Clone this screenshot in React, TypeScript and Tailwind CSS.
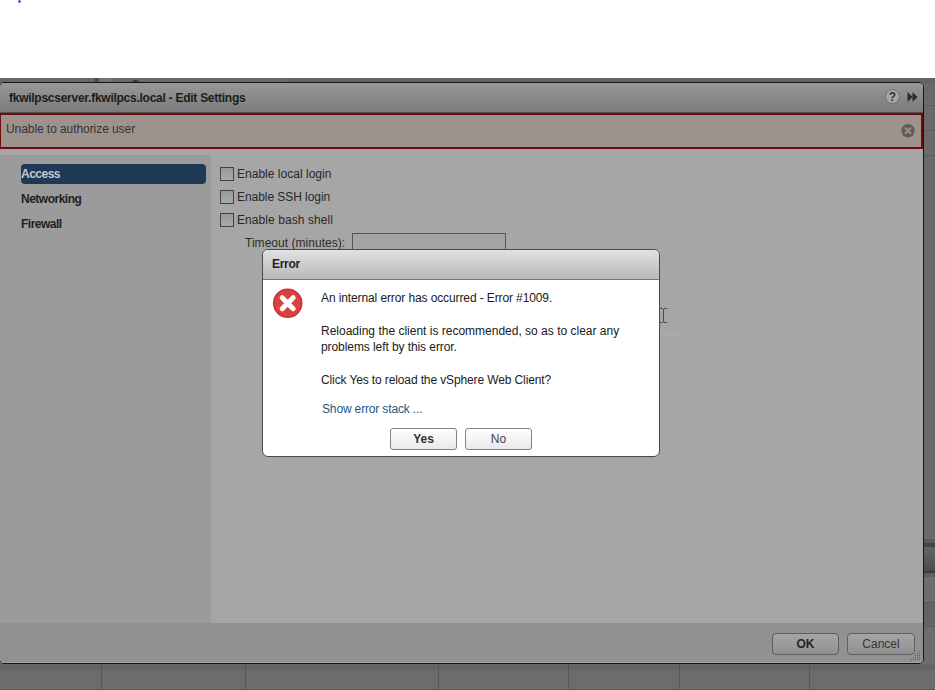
import clsx from "clsx";

const navItems = [
  { label: "Access", active: true },
  { label: "Networking", active: false },
  { label: "Firewall", active: false },
];

const options = [
  { label: "Enable local login", tracking: "tracking-[0.02px]" },
  { label: "Enable SSH login", tracking: "tracking-[-0.06px]" },
  { label: "Enable bash shell", tracking: "tracking-[0.08px]" },
];

function Backdrop() {
  return (
    <div className="flex h-full flex-col bg-[#6c6c6c]">
      <div className="flex h-[5px] shrink-0 bg-[#696969]">
        <div className="w-[94px]" />
        <div className="w-[5px] bg-[#48525c]" />
        <div className="w-[14px] bg-[#747474]" />
        <div className="w-[19px]" />
        <div className="mt-[2px] h-[3px] w-[7px] rounded-t-full border-t-2 border-[#303b46]" />
        <div className="w-[148px]" />
        <div className="grow bg-[#646464]" />
      </div>
      <div className="flex h-[581px] shrink-0 justify-end">
        <div className="flex w-[11px] flex-col bg-[#6a6a6a]">
          <div className="h-[23px] border-b border-[#5c5c5c]" />
          <div className="h-[25px] border-b border-[#5c5c5c]" />
          <div className="h-[25px] border-b border-[#5c5c5c]" />
          <div className="h-[387px] border-b-4 border-[#5c5c5c]" />
          <div className="h-1 shrink-0 bg-[#3b4652]" />
          <div className="h-[26px] border-b-2 border-[#3c3c3c] bg-gradient-to-b from-[#656565] to-[#4b4b4b]" />
          <div className="h-1 bg-[#5e5e5e]" />
          <div className="h-[26px] border-b border-[#575757] bg-[#6d6d6d]" />
          <div className="h-6 border-b border-[#5b5b5b] bg-[#636363]" />
          <div className="grow bg-[#6d6d6d]" />
        </div>
      </div>
      <div className="flex h-[26px] border-b border-[#605b5b] bg-gradient-to-b from-[#656565] from-20% to-[#6c6c6c] to-30%">
        <div className="w-[102px] border-r border-[#575757]" />
        <div className="w-36 border-r border-[#575757]" />
        <div className="w-[193px] border-r border-[#575757]" />
        <div className="w-[130px] border-r border-[#575757]" />
        <div className="w-[111px] border-r border-[#575757]" />
        <div className="w-[130px] border-r border-[#575757]" />
      </div>
    </div>
  );
}

function TitleBar() {
  return (
    <div className="flex h-[30px] shrink-0 items-center justify-between border-b border-[#555] bg-gradient-to-b from-[#989898] to-[#7b7b7b] pr-1 pl-[9px]">
      <h1 className="font-bold tracking-[-0.26px] text-[#1c1c1c]">
        fkwilpscserver.fkwilpcs.local - Edit Settings
      </h1>
      <div className="mt-[-2px] flex items-center gap-[7px]">
        <span className="flex h-[15px] w-[15px] items-center justify-center rounded-full border border-[#6d6d6d] bg-[#a8a8a8] text-[12px] leading-none font-bold text-[#333]">
          ?
        </span>
        <svg width="12" height="12" viewBox="0 0 12 12" fill="#2b2b2b">
          <path d="M.5 1l5 5-5 5zM5.5 1l5 5-5 5z" />
        </svg>
      </div>
    </div>
  );
}

function AlertBar() {
  return (
    <div className="flex h-9 shrink-0 justify-between border-2 border-l border-[#6d0c0c] bg-[#9e938c] pr-[6px] pl-[5px]">
      <p className="pt-[5px] tracking-[-0.07px] text-[#35313a]">Unable to authorize user</p>
      <svg className="mt-2" width="15" height="15" viewBox="0 0 15 15">
        <circle cx="8" cy="7.8" r="6.7" fill="#5f5d58" />
        <path d="M5.5 5.3l5 5M10.5 5.3l-5 5" stroke="#968f88" strokeWidth="2.2" strokeLinecap="round" />
      </svg>
    </div>
  );
}

function SettingsWindow() {
  return (
    <div className="absolute top-1 left-[-1px] flex h-[582px] w-[925px] flex-col overflow-hidden rounded-[5px] border border-[#151515] bg-[#a6a6a6]">
      <TitleBar />
      <AlertBar />
      <div className="flex grow pt-[6px]">
        <nav className="flex w-[211px] flex-col gap-[5px] bg-[#9b9b9b] pt-[9px] pr-[5px] pl-[21px]">
          {navItems.map((item) => (
            <div
              key={item.label}
              className={clsx(
                "h-5 rounded-[4px] leading-5 font-bold tracking-[-0.5px]",
                item.active ? "bg-[#1f3853] text-[#c4c9cf]" : "text-[#222]"
              )}
            >
              {item.label}
            </div>
          ))}
        </nav>
        <div className="flex flex-col pt-[7px] pl-[9px]">
          {options.map((option) => (
            <label key={option.label} className="flex h-[23px] items-center gap-[3px] text-[#27272c]">
              <span className="h-[14px] w-[14px] border border-[#414444] bg-gradient-to-b from-[#999] to-[#aaa]" />
              <span className={option.tracking}>{option.label}</span>
            </label>
          ))}
          <div className="flex h-[23px] pl-[26px] text-[#2d2d2d]">
            <span className="ml-[-1px] w-[107px] shrink-0 pt-[3px] tracking-[0.03px] whitespace-nowrap">
              Timeout (minutes):
            </span>
            <span className="mt-[2px] h-[22px] w-[154px] border border-[#555] bg-[#a4a4a4]" />
          </div>
        </div>
      </div>
      <div className="flex h-10 shrink-0 items-start justify-end gap-2 border-b border-[#a3a3a3] bg-[#919191] pt-[10px] pr-2">
        <button className="h-[22px] w-[67px] rounded-[4px] border border-[#5f5f5f] bg-gradient-to-b from-[#a5a5a5] to-[#919191] leading-5 font-bold text-[#242424]">
          OK
        </button>
        <button className="h-[22px] w-[68px] rounded-[4px] border border-[#5f5f5f] bg-gradient-to-b from-[#a5a5a5] to-[#919191] leading-5 text-[#363636]">
          Cancel
        </button>
      </div>
      <svg className="absolute right-[2px] bottom-[2px]" width="10" height="10" viewBox="0 0 10 10" stroke="#585858">
        <path d="M8 .5h1M6 2.5h3M4 4.5h5M2 6.5h7M0 8.5h9" strokeDasharray="1 1" />
      </svg>
    </div>
  );
}

function TextCursor() {
  return (
    <div className="absolute top-[230px] left-[660px]">
      <svg width="25" height="28" viewBox="0 0 25 28" fill="none">
        <path d="M0 .5h3M4 .5h3M3.5 1v13M0 14.5h3M4 14.5h3" stroke="#4b4b4b" />
        <path d="M0 26.5h23" stroke="#b0b0b0" />
      </svg>
    </div>
  );
}

function ErrorDialog() {
  return (
    <div className="absolute top-[171px] left-[262px] flex h-[208px] w-[398px] flex-col overflow-hidden rounded-[6px] border border-[#4a4a4a] bg-white">
      <div className="h-[30px] shrink-0 border-b border-[#777] bg-gradient-to-b from-[#e1e1e1] to-[#b9b9b9] pl-[9px] leading-[29px] font-bold tracking-[-0.3px] text-[#222]">
        Error
      </div>
      <div className="flex pt-[9px] pl-[9px]">
        <svg className="mt-[-1px] shrink-0" width="32" height="32" viewBox="0 0 32 32">
          <circle cx="15.7" cy="15.2" r="14.8" fill="#cf3537" />
          <circle cx="15.7" cy="15.2" r="13" fill="#d94240" />
          <path d="M10.2 9.7l11 11M21.2 9.7l-11 11" stroke="#fff" strokeWidth="5" strokeLinecap="round" />
        </svg>
        <div className="pl-[17px] text-[#202020]">
          <p className="h-[33px] pt-[1px] leading-4 tracking-[-0.11px]">An internal error has occurred - Error #1009.</p>
          <p className="h-[49px] pt-[1px] leading-4">
            <span>Reloading the client is recommended, so as to clear any</span>
            <br />
            <span className="tracking-[-0.08px]">problems left by this error.</span>
          </p>
          <p className="h-[29px] pt-[1px] leading-4 tracking-[-0.12px]">Click Yes to reload the vSphere Web Client?</p>
          <a className="block pt-[1px] pl-[1px] leading-4 tracking-[-0.15px] text-[#225687]">Show error stack ...</a>
        </div>
      </div>
      <div className="mt-auto mb-[6px] flex gap-2 pl-[127px]">
        <button className="h-[22px] w-[67px] rounded-[3px] border border-[#828282] bg-gradient-to-b from-white to-[#e9e9e9] leading-5 font-bold text-[#333]">
          Yes
        </button>
        <button className="h-[22px] w-[67px] rounded-[3px] border border-[#828282] bg-gradient-to-b from-white to-[#e9e9e9] leading-5 text-[#444]">
          No
        </button>
      </div>
    </div>
  );
}

export default function App() {
  return (
    <div className="h-[690px] w-[935px] overflow-hidden bg-white font-['Liberation_Sans',Arial,sans-serif] text-[12px]">
      <div className="h-[78px] pl-[18px]">
        <div className="h-[3px] w-[3px] bg-[radial-gradient(circle,#1414dd_25%,#fff_85%)]" />
      </div>
      <div className="relative h-[612px] overflow-hidden">
        <Backdrop />
        <SettingsWindow />
        <TextCursor />
        <ErrorDialog />
      </div>
    </div>
  );
}
